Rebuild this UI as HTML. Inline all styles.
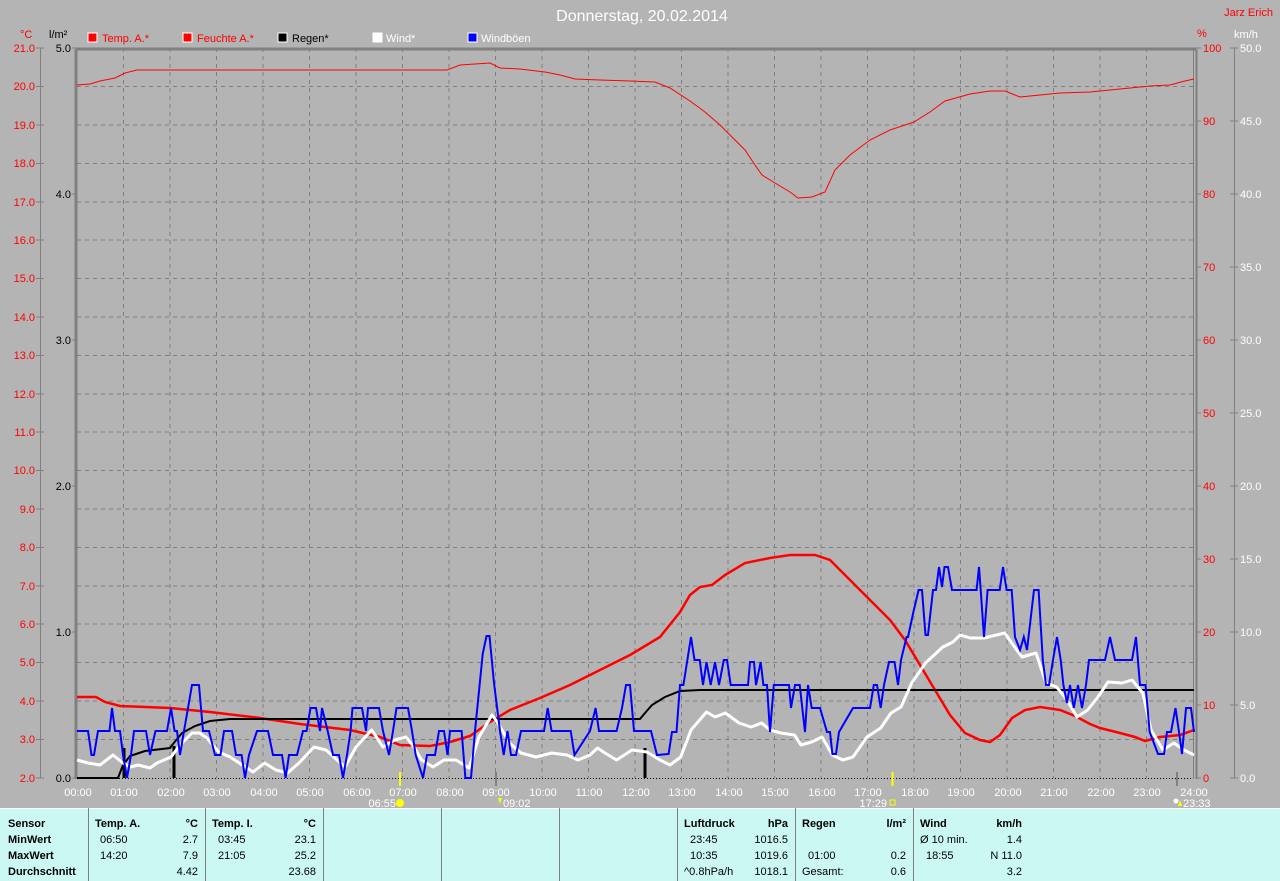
<!DOCTYPE html>
<html><head><meta charset="utf-8"><style>
html,body{margin:0;padding:0;background:#b4b4b4;width:1280px;height:881px;overflow:hidden}
svg{display:block}
text{font-family:"Liberation Sans",sans-serif;font-size:11px}
</style></head><body>
<svg width="1280" height="881" viewBox="0 0 1280 881" xmlns="http://www.w3.org/2000/svg">
<rect width="1280" height="881" fill="#b4b4b4"/>
<text x="642" y="21" fill="#fff" style="font-size:16px" text-anchor="middle">Donnerstag, 20.02.2014</text>
<text x="1273" y="16" fill="#f00" text-anchor="end">Jarz Erich</text>
<text x="20" y="38" fill="#f00">°C</text>
<text x="49" y="38" fill="#000">l/m²</text>
<text x="1197" y="37" fill="#f00">%</text>
<text x="1234" y="38" fill="#fff">km/h</text>
<g>
<rect x="88" y="33" width="9" height="9" fill="#f00" stroke="#fff"/><text x="102" y="42" fill="#f00">Temp. A.*</text>
<rect x="183" y="33" width="9" height="9" fill="#f00" stroke="#fff"/><text x="197" y="42" fill="#f00">Feuchte A.*</text>
<rect x="278" y="33" width="9" height="9" fill="#000" stroke="#fff"/><text x="292" y="42" fill="#000">Regen*</text>
<rect x="373" y="33" width="9" height="9" fill="#fff" stroke="#fff"/><text x="386" y="42" fill="#fff">Wind*</text>
<rect x="468" y="33" width="9" height="9" fill="#00f" stroke="#fff"/><text x="481" y="42" fill="#fff">Windböen</text>
</g>
<g stroke="#808080" stroke-dasharray="4,4" stroke-width="1">
<path d="M77 86.5H1193M77 125H1193M77 163.5H1193M77 202H1193M77 240H1193M77 278.5H1193M77 317H1193M77 355.5H1193M77 394H1193M77 432H1193M77 470.5H1193M77 509H1193M77 547.5H1193M77 586H1193M77 624H1193M77 662.5H1193M77 701H1193M77 739.5H1193"/>
<path d="M123.5 48V778M170 48V778M216.5 48V778M263 48V778M309.5 48V778M356 48V778M402.5 48V778M449 48V778M495.5 48V778M542 48V778M588.5 48V778M635 48V778M681.5 48V778M728 48V778M774.5 48V778M821 48V778M867.5 48V778M914 48V778M960.5 48V778M1007 48V778M1053.5 48V778M1100 48V778M1146.5 48V778"/>
</g>
<path d="M77 778.5H1193" stroke="#000" stroke-dasharray="1,2"/>
<path d="M76 49V779M76 49H1196" stroke="#808080" stroke-width="3" fill="none"/>
<path d="M1193.5 49V779" stroke="#808080" stroke-width="1"/>
<path d="M1196.5 49V779" stroke="#808080" stroke-width="2"/>
<g stroke="#808080"><path d="M40.5 48V778M1234.5 48V778"/>
<path d="M36 48H44M36 86.5H44M36 125H44M36 163.5H44M36 202H44M36 240H44M36 278.5H44M36 317H44M36 355.5H44M36 394H44M36 432H44M36 470.5H44M36 509H44M36 547.5H44M36 586H44M36 624H44M36 662.5H44M36 701H44M36 739.5H44M36 778H44"/>
<path d="M72 48H77M72 194H77M72 340H77M72 486H77M72 632H77M72 778H77"/>
<path d="M1196 48H1201M1196 121H1201M1196 194H1201M1196 267H1201M1196 340H1201M1196 413H1201M1196 486H1201M1196 559H1201M1196 632H1201M1196 705H1201M1196 778H1201"/>
<path d="M1230 48H1238M1230 121H1238M1230 194H1238M1230 267H1238M1230 340H1238M1230 413H1238M1230 486H1238M1230 559H1238M1230 632H1238M1230 705H1238M1230 778H1238"/>
</g>
<g fill="#f00" text-anchor="end">
<text x="35" y="52">21.0</text><text x="35" y="90">20.0</text><text x="35" y="129">19.0</text><text x="35" y="167">18.0</text><text x="35" y="206">17.0</text><text x="35" y="244">16.0</text><text x="35" y="282">15.0</text><text x="35" y="321">14.0</text><text x="35" y="359">13.0</text><text x="35" y="398">12.0</text><text x="35" y="436">11.0</text><text x="35" y="474">10.0</text><text x="35" y="513">9.0</text><text x="35" y="551">8.0</text><text x="35" y="590">7.0</text><text x="35" y="628">6.0</text><text x="35" y="666">5.0</text><text x="35" y="705">4.0</text><text x="35" y="743">3.0</text><text x="35" y="782">2.0</text>
</g>
<g fill="#000" text-anchor="end">
<text x="71" y="52">5.0</text><text x="71" y="198">4.0</text><text x="71" y="344">3.0</text><text x="71" y="490">2.0</text><text x="71" y="636">1.0</text><text x="71" y="782">0.0</text>
</g>
<g fill="#f00">
<text x="1203" y="52">100</text><text x="1203" y="125">90</text><text x="1203" y="198">80</text><text x="1203" y="271">70</text><text x="1203" y="344">60</text><text x="1203" y="417">50</text><text x="1203" y="490">40</text><text x="1203" y="563">30</text><text x="1203" y="636">20</text><text x="1203" y="709">10</text><text x="1203" y="782">0</text>
</g>
<g fill="#fff">
<text x="1240" y="52">50.0</text><text x="1240" y="125">45.0</text><text x="1240" y="198">40.0</text><text x="1240" y="271">35.0</text><text x="1240" y="344">30.0</text><text x="1240" y="417">25.0</text><text x="1240" y="490">20.0</text><text x="1240" y="563">15.0</text><text x="1240" y="636">10.0</text><text x="1240" y="709">5.0</text><text x="1240" y="782">0.0</text>
</g>
<g fill="#fff" text-anchor="middle">
<text x="78" y="796">00:00</text><text x="124" y="796">01:00</text><text x="171" y="796">02:00</text><text x="217" y="796">03:00</text><text x="264" y="796">04:00</text><text x="310" y="796">05:00</text><text x="357" y="796">06:00</text><text x="403" y="796">07:00</text><text x="450" y="796">08:00</text><text x="496" y="796">09:00</text><text x="543" y="796">10:00</text><text x="589" y="796">11:00</text><text x="636" y="796">12:00</text><text x="682" y="796">13:00</text><text x="729" y="796">14:00</text><text x="775" y="796">15:00</text><text x="822" y="796">16:00</text><text x="868" y="796">17:00</text><text x="915" y="796">18:00</text><text x="961" y="796">19:00</text><text x="1008" y="796">20:00</text><text x="1054" y="796">21:00</text><text x="1101" y="796">22:00</text><text x="1147" y="796">23:00</text><text x="1194" y="796">24:00</text>
</g>
<g fill="#fff" text-anchor="end">
<text x="396" y="807">06:55</text><text x="887" y="807">17:29</text></g>
<text x="503" y="807" fill="#fff">09:02</text><text x="1183" y="807" fill="#fff">23:33</text>
<circle cx="400" cy="803" r="4" fill="#ff0"/>
<rect x="890" y="800" width="5" height="5" fill="none" stroke="#ff0"/>
<path d="M400 772V786M892.5 772V786" stroke="#ff0" stroke-width="2"/>
<path d="M498 798l2 6l2-6z" fill="#ff0"/>
<path d="M1180 800l2 6h-4z" fill="#ff0"/><circle cx="1176" cy="801" r="2.5" fill="#fff"/>
<path d="M496 772V786M1177 772V786" stroke="#808080" stroke-width="2"/>

<polyline fill="none" stroke="#f00" stroke-width="1" points="77,85 90,84 100,81 115,78 125,73 137,70 160,70 447,70 460,65 475,64 490,63 500,68 520,69 545,72 560,75 575,79 600,80 630,81 655,82 670,88 690,101 705,112 720,125 735,140 745,150 755,165 762,175 775,183 790,192 798,198 812,197 825,192 835,170 850,155 870,140 890,130 914,122 930,112 945,101 970,94 990,91 1005,91 1020,97 1040,95 1060,93 1090,92 1120,89 1150,86 1170,85 1185,81 1194,79"/>
<polyline fill="none" stroke="#f00" stroke-width="2.5" points="77,697 96,697 105,702 120,706 170,708 210,712 260,718 300,724 350,730 380,737 400,745 430,746 450,742 470,736 490,722 510,710 540,698 570,685 600,670 630,655 660,637 680,612 690,595 700,587 712,585 725,575 745,563 770,558 790,555 815,555 830,560 850,580 870,600 890,620 905,640 920,665 935,690 950,715 965,733 980,740 990,742 1000,735 1012,718 1025,710 1040,707 1060,710 1075,716 1090,724 1100,728 1120,733 1135,737 1145,741 1160,737 1180,735 1194,730"/>
<polyline fill="none" stroke="#000" stroke-width="2" points="77,778 118,778 123,765 130,756 145,751 170,748 173,744 182,733 195,726 210,721 230,719 640,719 645,713 652,705 665,697 680,691 700,690 1194,690"/>
<path d="M124 748V778M174 746V778M645 748V778" stroke="#000" stroke-width="3"/>
<polyline fill="none" stroke="#fff" stroke-width="3" stroke-linejoin="round" points="77,760 88,763 100,765 113,755 123,763 130.6,767 138,765 150,768 157,763 171,757 180,745 192,733 199.5,733 207,738 218.6,752 230,757 245.4,767 253,772 264.5,763 276,770 287.5,773 299,763 314,747 326,750 345,767 356,747 371.7,730 383,747 394.6,740 406,737 414,747 421.5,760 433,767 444,760 456,760 469,768 479,737 492,715 498,723 509.5,743 521,753 536,757 551.6,753 567,755 578,760 590,755 597.5,748 605,753 616.6,760 632,750 647,752 660,760 670,765 680.7,757 691,730 706.5,712 715,717 725.5,713 739,723 751,727 761.7,723 770,730 780.7,733 794.5,735 801,745 811.7,742 822,737 832.4,755 842.8,760 853,757 867,737 880.7,728 891,713 901,707 911.7,683 925.5,663 942.8,647 953,642 960,635 970,638 984,638 1004.8,633 1011.7,643 1022,657 1036,653 1046,683 1056.6,687 1067,700 1077,717 1087.6,710 1098,697 1108,682 1122,683 1132,680 1142.8,693 1151,730 1163,750 1173.8,743 1184,750 1194,755"/>
<polyline fill="none" stroke="#00f" stroke-width="2" points="77,731 88,731 91.5,755 94,755 98,731 109.5,731 112,708 115,731 120,731 123,755 127,778 131,755 134,731 146,731 150,755 155.5,731 167,731 171,708 174.6,731 177,731 180,755 184,731 192,685 199,685 203,731 209,731 215,755 220.5,755 224,731 232,731 236,755 241.6,755 245,778 249,755 257,731 268,731 273,755 282,755 285.6,778 289,755 297,755 303,731 306.6,731 310.5,708 316,708 320,731 322,708 327.7,731 333,755 339,755 343,778 347,755 350.6,731 352.5,708 362,708 366,731 368,708 379,708 383,731 389,755 393,731 396.5,708 408,708 412,731 415.7,755 423,778 427,755 435,755 439,731 444,731 447.5,755 450,731 461.6,731 465.4,778 471,778 475,731 482.7,654 486.5,636 489.5,636 494,683 500,731 503.7,755 507.5,731 511,755 516,755 521,731 544,731 547.7,708 551.6,731 570.7,731 574.5,755 590,731 595.6,708 599,731 616.6,731 622,708 626,685 630,685 634,731 651,731 657,755 668.6,754 672,732 676.5,732 680,685 683.4,685 691,637 694.5,660 699.7,660 703,685 706.5,662 710.7,685 715,662 719,685 723.8,660 727,660 730.7,685 748,685 750,662 754,662 756,685 760.7,662 763.4,685 767,685 770,732 773.8,685 789,685 791,708 795,685 799.7,685 805,732 808,685 811.7,708 820,708 827,732 830,732 832.4,754 836,754 839,732 853,708 870,708 873.8,685 877,685 880.7,708 884,685 889,662 894.5,662 898,685 901,660 906.6,637 908,637 913.4,612 918.6,590 922,590 925.5,635 928,635 933,590 936,590 939,567 942,587 944.5,567 948,567 952,590 976.6,590 979,567 980.7,590 984,637 987.6,590 999.7,590 1003,567 1006.6,590 1011.7,590 1015,637 1020,650 1023.8,637 1027,650 1034,590 1038.6,590 1042.8,660 1046,685 1049,685 1053,660 1057,637 1060.7,660 1063.4,685 1067,703 1070,685 1073.8,708 1078,685 1082,708 1086,685 1089,660 1105,660 1110,637 1115,660 1132,660 1136,637 1140,685 1145.5,685 1149.7,732 1158,754 1164,754 1167,732 1171,732 1175.5,708 1179,732 1182,754 1186,708 1191,708 1194,732"/>

<rect x="0" y="808" width="1280" height="73" fill="#ccf8f4"/>
<path d="M0 808.5H1280" stroke="#fff"/>
<g stroke="#808080" stroke-width="1">
<path d="M88.5 808V881M205.5 808V881M323.5 808V881M441.5 808V881M559.5 808V881M677.5 808V881M795.5 808V881M913.5 808V881"/>
</g>
<g fill="#000" font-weight="bold">
<text x="8" y="827">Sensor</text><text x="8" y="843">MinWert</text><text x="8" y="859">MaxWert</text><text x="8" y="875">Durchschnitt</text>
<text x="95" y="827">Temp. A.</text><text x="198" y="827" text-anchor="end">°C</text>
<text x="212" y="827">Temp. I.</text><text x="316" y="827" text-anchor="end">°C</text>
<text x="684" y="827">Luftdruck</text><text x="788" y="827" text-anchor="end">hPa</text>
<text x="802" y="827">Regen</text><text x="906" y="827" text-anchor="end">l/m²</text>
<text x="920" y="827">Wind</text><text x="1022" y="827" text-anchor="end">km/h</text>
</g>
<g fill="#000">
<text x="100" y="843">06:50</text><text x="198" y="843" text-anchor="end">2.7</text>
<text x="100" y="859">14:20</text><text x="198" y="859" text-anchor="end">7.9</text>
<text x="198" y="875" text-anchor="end">4.42</text>
<text x="218" y="843">03:45</text><text x="316" y="843" text-anchor="end">23.1</text>
<text x="218" y="859">21:05</text><text x="316" y="859" text-anchor="end">25.2</text>
<text x="316" y="875" text-anchor="end">23.68</text>
<text x="690" y="843">23:45</text><text x="788" y="843" text-anchor="end">1016.5</text>
<text x="690" y="859">10:35</text><text x="788" y="859" text-anchor="end">1019.6</text>
<text x="684" y="875">^0.8hPa/h</text><text x="788" y="875" text-anchor="end">1018.1</text>
<text x="808" y="859">01:00</text><text x="906" y="859" text-anchor="end">0.2</text>
<text x="802" y="875">Gesamt:</text><text x="906" y="875" text-anchor="end">0.6</text>
<text x="920" y="843">Ø 10 min.</text><text x="1022" y="843" text-anchor="end">1.4</text>
<text x="926" y="859">18:55</text><text x="1022" y="859" text-anchor="end">N 11.0</text>
<text x="1022" y="875" text-anchor="end">3.2</text>
</g>
</svg>
</body></html>
